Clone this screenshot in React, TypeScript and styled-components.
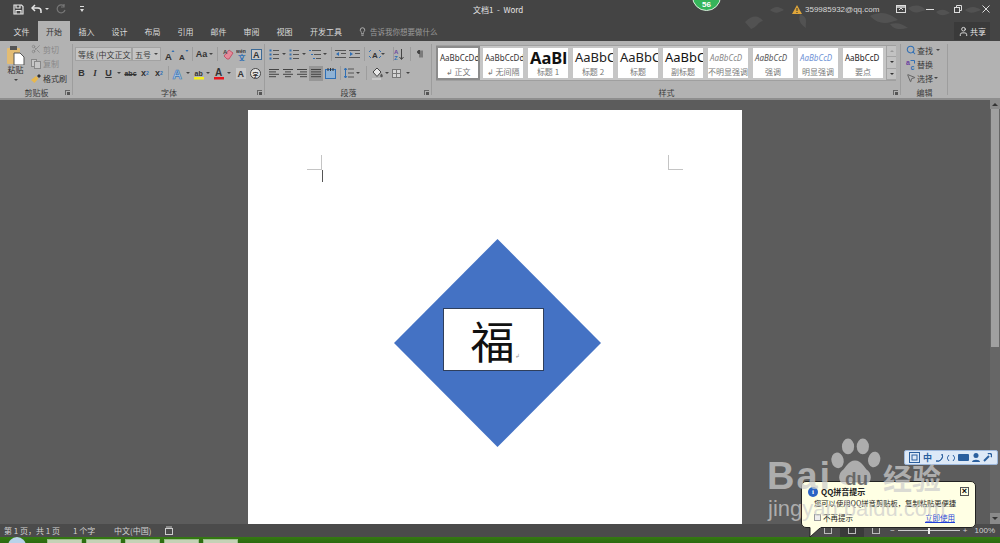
import React from 'react';
import styled, { createGlobalStyle } from 'styled-components';
import { Lightbulb, User, Scissors, Search, MousePointer2 } from 'lucide-react';

const Global = createGlobalStyle`
  html, body { margin: 0; padding: 0; background: #555; }
  body { font-family: "Noto Sans CJK SC", "Liberation Sans", sans-serif; }
`;
const Win = styled.div`position: relative; width: 1000px; height: 543px; overflow: hidden; display: flex; flex-direction: column; background: #5c5c5c;`;
const TitleBar = styled.div`position: relative; height: 21px; box-sizing: border-box; padding-bottom: 3px; background: #444; display: flex; align-items: center; color: #ddd; font-size: 8px; flex: none;`;
const Qat = styled.div`display: flex; align-items: center; width: 473px; padding-left: 13px; box-sizing: border-box;`;
const QatGap = styled.span<{ $w: number }>`width: ${p => p.$w}px; flex: none;`;
const DocTitle = styled.div`width: 319px; font-size: 8px; color: #e4e4e4; white-space: pre;`;
const Account = styled.div`display: flex; align-items: center; gap: 3px; font-family: "Liberation Sans", sans-serif; font-size: 8px; color: #d8d8d8;`;
const WinBtns = styled.div`display: flex; align-items: center; margin-left: 17px; gap: 20px; color: #ddd;`;
const Leaves = styled.svg`position: absolute; left: 740px; top: 0; pointer-events: none;`;
const TabBar = styled.div`height: 20px; background: #444; display: flex; align-items: stretch; padding-left: 5px; flex: none; position: relative;`;
const Tab = styled.div<{ $on?: boolean; $w: number }>`
  width: ${p => p.$w}px; display: flex; align-items: center; justify-content: center; font-size: 8px;
  color: ${p => (p.$on ? '#333' : '#dcdcdc')}; background: ${p => (p.$on ? '#b2b2b2' : 'transparent')};
`;
const Tell = styled.div`display: flex; align-items: center; gap: 3px; margin-left: 7px; font-size: 7.5px; color: #9c9c9c;`;
const Share = styled.div`position: absolute; left: 954px; top: 1px; width: 36px; height: 18px; background: #3a3a3a; color: #e4e4e4; font-size: 8px; display: flex; align-items: center; justify-content: center; gap: 1px;`;
const Ribbon = styled.div`height: 57px; background: #b2b2b2; display: flex; flex: none; border-bottom: 2px solid #8e8e8e; position: relative;`;
const Group = styled.div<{ $w: number }>`
  width: ${p => p.$w}px; flex: none; box-sizing: border-box; position: relative; display: flex; flex-direction: column;
  &::after { content: ''; position: absolute; right: 0; top: 3px; bottom: 3px; width: 1px; background: #9d9d9d; }
`;
const GroupBody = styled.div`height: 44px; display: flex; flex-direction: column;`;
const GroupLabel = styled.div`flex: 1; display: flex; align-items: center; justify-content: center; font-size: 8px; color: #3c3c3c; padding-top: 3px; position: relative;`;
const Launcher = styled.span`position: absolute; right: 3px; bottom: 3px; width: 5px; height: 5px; border-left: 1px solid #666; border-top: 1px solid #666; box-sizing: border-box;
  &::after { content: ''; position: absolute; right: 0; bottom: 0; width: 3px; height: 3px; background: #555; }`;
const Row = styled.div<{ $top: number; $left: number }>`display: flex; align-items: center; height: 16px; margin-top: ${p => p.$top}px; margin-left: ${p => p.$left}px;`;
const Tool = styled.div<{ $w?: number; $on?: boolean; $c?: string; $s?: number; $ml?: number }>`
  width: ${p => p.$w ?? 14}px; height: 15px; flex: none; display: flex; align-items: center; justify-content: center; margin-left: ${p => p.$ml ?? 0}px;
  font-family: "Liberation Sans", sans-serif; font-size: ${p => p.$s ?? 9}px; font-weight: 700; color: ${p => p.$c ?? '#333'};
  background: ${p => (p.$on ? '#969696' : 'transparent')}; line-height: 1;
  sub, sup { font-size: 5px; color: #2f6fb5; line-height: 0; }
`;
const Caret = styled.span<{ $m?: number; $c?: string }>`width: 0; height: 0; flex: none; margin: 0 ${p => p.$m ?? 3}px; border-left: 2px solid transparent; border-right: 2px solid transparent; border-top: 2px solid ${p => p.$c ?? '#444'};`;
const Sep = styled.span<{ $l: number; $r: number }>`width: 1px; height: 14px; flex: none; background: #9d9d9d; margin: 0 ${p => p.$r}px 0 ${p => p.$l}px;`;
const Select = styled.div<{ $w: number }>`width: ${p => p.$w}px; height: 14px; box-sizing: border-box; flex: none; background: #c4c4c4; border: 1px solid #a2a2a2; display: flex; align-items: center; justify-content: space-between; padding: 0 2px; font-size: 8px; color: #3a3a3a; white-space: nowrap; overflow: hidden;`;
const ClipBody = styled.div`display: flex; height: 44px;`;
const Paste = styled.div`width: 31px; flex: none; display: flex; flex-direction: column; align-items: center; padding-top: 5px; font-size: 8px; color: #333; line-height: 10px;`;
const PasteCaret = styled.span`width: 0; height: 0; margin-top: 4px; border-left: 2px solid transparent; border-right: 2px solid transparent; border-top: 2px solid #444;`;
const ClipList = styled.div`display: flex; flex-direction: column; padding-top: 2px; gap: 2.5px;`;
const ClipItem = styled.div<{ $dim?: boolean }>`display: flex; align-items: center; height: 12px; font-size: 8px; gap: 2px; color: ${p => (p.$dim ? '#888' : '#333')};`;
const Gallery = styled.div`display: flex; margin: 4px 0 0 4px; width: 460px; height: 36px; box-sizing: border-box; padding-left: 1px; gap: 5px; background: #c6c6c6; border: 1px solid #9f9f9f;`;
const Card = styled.div<{ $on?: boolean }>`
  width: 40px; height: 30px; margin-top: 2px; flex: none; background: #fff;
  outline: ${p => (p.$on ? '2px solid #8c8c8c' : 'none')}; display: flex; flex-direction: column; align-items: center; overflow: hidden;
`;
const Sample = styled.div<{ $s?: number; $b?: boolean; $c?: string; $i?: boolean }>`
  height: 18px; width: 100%; padding-left: 2px; box-sizing: border-box; overflow: hidden; white-space: nowrap; line-height: 19px; flex: none;
  font-family: "Noto Sans", "Liberation Sans", sans-serif; font-size: ${p => p.$s ?? 8}px; font-weight: ${p => (p.$b ? 700 : 400)}; color: ${p => p.$c ?? '#333'};
  font-style: ${p => (p.$i ? 'italic' : 'normal')}; text-align: left;
`;
const CardName = styled.div`font-size: 8px; color: #777; white-space: nowrap; line-height: 11px;`;
const Spin = styled.div`width: 10px; flex: none; display: flex; flex-direction: column; margin-left: -2px;`;
const SpinBtn = styled.div<{ $dim?: boolean }>`flex: 1; background: #c2c2c2; border-left: 1px solid #a4a4a4; border-bottom: 1px solid #a4a4a4; display: flex; align-items: center; justify-content: center;
  span { width: 0; height: 0; border-left: 2px solid transparent; border-right: 2px solid transparent; border-top: 2px solid ${p => (p.$dim ? '#999' : '#333')}; }`;
const SpinUp = styled.span`transform: rotate(180deg);`;
const EditList = styled.div`display: flex; flex-direction: column; padding: 3px 0 0 5px; gap: 2px;`;
const EditItem = styled.div`display: flex; align-items: center; height: 12px; gap: 1px; font-size: 8px; color: #3a3a3a;`;
const Collapse = styled.div`position: absolute; left: 988px; top: 50px; color: #333;`;
const Work = styled.div`flex: 1; position: relative; display: flex; min-height: 0; overflow: hidden; background: #5c5c5c;`;
const PageArea = styled.div`flex: 1; display: flex; justify-content: flex-start; padding: 10px 0 0 248px; box-sizing: border-box; min-width: 0;`;
const Page = styled.div`position: relative; width: 494px; height: 420px; flex: none; background: #fff;`;
const Crop = styled.span<{ $x: number; $y: number; $w: number; $h: number }>`position: absolute; left: ${p => p.$x}px; top: ${p => p.$y}px; width: ${p => p.$w}px; height: ${p => p.$h}px; background: #c4c4c4;`;
const Cursor = styled.span`position: absolute; left: 74px; top: 60px; width: 1px; height: 12px; background: #555;`;
const Diamond = styled.svg`position: absolute; left: 146px; top: 129px;`;
const FuBox = styled.div`position: absolute; left: 195px; top: 198px; width: 101px; height: 63px; box-sizing: border-box; background: #fff; border: 1px solid #2f3f5c; display: flex; align-items: center; justify-content: center; padding-left: 3px; font-size: 44px; line-height: 1; color: #111;`;
const Para = styled.span`font-size: 6px; color: #999; align-self: flex-end; margin-bottom: 11px;`;
const ScrollBar = styled.div`width: 10px; flex: none; background: #666; display: flex; flex-direction: column; align-items: center;`;
const ScrollHead = styled.div`width: 10px; height: 9px; background: #8a8a8a; display: flex; align-items: center; justify-content: center;
  span { width: 0; height: 0; border-left: 3px solid transparent; border-right: 3px solid transparent; border-bottom: 3px solid #333; }`;
const Thumb = styled.div`width: 8px; height: 238px; background: #a0a0a0;`;
const ScrollFoot = styled.div`margin-top: auto; width: 10px; height: 11px; background: #8a8a8a; display: flex; align-items: center; justify-content: center;
  span { width: 0; height: 0; border-left: 3px solid transparent; border-right: 3px solid transparent; border-top: 3px solid #333; }`;
const Status = styled.div`height: 13px; flex: none; background: #4b4b4b; display: flex; align-items: center; font-size: 8px; color: #d2d2d2; padding-left: 4px; position: relative; white-space: pre;`;
const StatusItem = styled.span<{ $w: number }>`width: ${p => p.$w}px; flex: none;`;
const ViewBtn = styled.span<{ $on?: boolean; $last?: boolean }>`width: 24px; height: 13px; display: flex; align-items: center; justify-content: center; margin-right: ${p => (p.$last ? 2 : 0)}px; background: ${p => (p.$on ? '#3a3a3a' : 'transparent')};
  &::after { content: ''; width: 8px; height: 7px; border: 1px solid #bbb; box-sizing: border-box; }`;
const Zoom = styled.div`display: flex; align-items: center; margin-left: auto; font-family: "Liberation Sans", sans-serif; font-size: 8px; padding-right: 5px;`;
const ZoomPct = styled.span`margin-left: 7px;`;
const Track = styled.span`position: relative; width: 62px; height: 1px; background: #ccc; margin: 0 3px;
  &::after { content: ''; position: absolute; left: 30px; top: -3px; width: 2px; height: 7px; background: #eee; }`;
const Taskbar = styled.div`height: 6px; box-sizing: border-box; flex: none; background: linear-gradient(#357a12, #2a6a0f); display: flex; padding: 2px 0 0 47px; gap: 4px; position: relative; overflow: hidden;`;
const TaskBtn = styled.div`width: 35px; height: 8px; background: #c4d2b6; border: 1px solid #9cc08c; box-sizing: border-box;`;
const Orb = styled.span`position: absolute; left: 8px; top: 0; width: 18px; height: 18px; border-radius: 50%; background: #b9d3ea;`;
const Badge = styled.div`position: absolute; left: 692px; top: -18px; width: 29px; height: 29px; border-radius: 50%; background: #35b55a; border: 1px solid #dff0e0; box-sizing: border-box; color: #fff; font-family: "Liberation Sans", sans-serif; font-size: 8px; font-weight: 700; display: flex; align-items: flex-end; justify-content: center; padding-bottom: 1px; line-height: 9px;`;
const ImeBar = styled.div`position: absolute; left: 904px; top: 450px; width: 94px; height: 15px; box-sizing: border-box; background: #dde9f7; border: 1px solid #9db8dc; border-radius: 2px; display: flex; align-items: center; gap: 3px; padding-left: 4px; color: #2a5f9e; font-size: 9px; font-weight: 700;`;
const Tip = styled.div`position: absolute; left: 801px; top: 481px; width: 175px; height: 47px; box-sizing: border-box; background: #ffffe4; border: 1px solid #222; border-radius: 5px; padding: 3px 6px 0 12px; font-size: 8px; color: #222; display: flex; flex-direction: column;`;
const TipTail = styled.svg`position: absolute; left: 809px; top: 526px;`;
const TipHead = styled.div`display: flex; align-items: center; gap: 3px; font-weight: 700; height: 13px; margin-left: -6px;`;
const TipInfo = styled.span`width: 10px; height: 10px; border-radius: 50%; background: #2b63c4; color: #fff; font-size: 7px; line-height: 10px; text-align: center; font-family: "Liberation Serif", serif;`;
const TipClose = styled.span`margin-left: auto; width: 9px; height: 9px; border: 1px solid #555; box-sizing: border-box; font-family: "Liberation Sans", sans-serif; font-size: 9px; line-height: 7px; text-align: center; color: #000; font-weight: 700;`;
const TipBody = styled.div`height: 10px; line-height: 10px; font-size: 7.3px; white-space: nowrap;`;
const TipFoot = styled.div`display: flex; align-items: center; height: 13px; margin-top: 3px; gap: 2px; font-size: 7.5px;`;
const TipCheck = styled.span`width: 7px; height: 7px; border: 1px solid #999; box-sizing: border-box; background: #eee;`;
const TipLink = styled.span`margin-left: auto; color: #1f3fd8; text-decoration: underline; margin-right: 14px;`;
const Mark = styled.div`position: absolute; left: 0; top: 0; width: 1000px; height: 543px; pointer-events: none; color: rgba(205,205,205,.72);`;
const MarkBai = styled.span`position: absolute; left: 767px; top: 452px; font-family: "Liberation Sans", sans-serif; font-size: 38px; font-weight: 700; line-height: 48px; letter-spacing: 2px;`;
const MarkDu = styled.span`position: absolute; left: 845px; top: 468px; font-family: "Liberation Sans", sans-serif; font-size: 19px; font-weight: 700; line-height: 22px; color: rgba(92,92,92,.85);`;
const MarkJy = styled.span`position: absolute; left: 883px; top: 459px; font-size: 29px; font-weight: 700; line-height: 36px; white-space: nowrap;`;
const MarkUrl = styled.span`position: absolute; left: 768px; top: 495px; font-family: "Liberation Sans", sans-serif; font-size: 22px; line-height: 28px; white-space: nowrap;`;
const Paw = styled.svg`position: absolute; left: 828px; top: 437px;`;

const Lines = ({ a = 'l', c = '#444' }: { a?: 'l' | 'c' | 'r' | 'j'; c?: string }) => {
  const xs: Record<string, [number, number][]> = {
    l: [[1, 11], [1, 8], [1, 11], [1, 8]], c: [[1, 11], [3, 9], [1, 11], [3, 9]],
    r: [[1, 11], [4, 11], [1, 11], [4, 11]], j: [[1, 11], [1, 11], [1, 11], [1, 11]],
  };
  return <svg width="12" height="10" stroke={c} strokeWidth="1">{xs[a].map(([x1, x2], i) => <line key={i} x1={x1} x2={x2} y1={1.5 + i * 2.4} y2={1.5 + i * 2.4} />)}</svg>;
};
const ListIco = ({ n }: { n?: boolean }) => (
  <svg width="10" height="11" strokeWidth="1">{[1.5, 5.5, 9.5].map(y => <g key={y}><rect x="0.5" y={y - 1} width="2" height="2" fill={n ? '#3f74ad' : '#2f6fb5'} /><line x1="4" x2="10" y1={y} y2={y} stroke="#555" /></g>)}</svg>
);
const MultiIco = () => (
  <svg width="12" height="11" strokeWidth="1" stroke="#555"><line x1="3" x2="12" y1="1.5" y2="1.5" /><line x1="5" x2="12" y1="5.5" y2="5.5" /><line x1="7" x2="12" y1="9.5" y2="9.5" /><rect x="0" y="1" width="2" height="1" fill="#2f6fb5" stroke="none" /><rect x="2" y="5" width="2" height="1" fill="#2f6fb5" stroke="none" /><rect x="4" y="9" width="2" height="1" fill="#2f6fb5" stroke="none" /></svg>
);
const IndentIco = ({ flip }: { flip?: boolean }) => (
  <svg width="11" height="10" stroke="#555"><line x1="0" x2="11" y1="1.5" y2="1.5" /><line x1="6" x2="11" y1="4.5" y2="4.5" /><line x1="0" x2="11" y1="8.5" y2="8.5" /><path d={flip ? 'M1 3l3 2-3 2z' : 'M4 3L1 5l3 2z'} fill="#2f6fb5" stroke="none" /></svg>
);
const TextDir = () => <svg width="12" height="10"><text x="3" y="8.5" fontFamily="Liberation Sans" fontSize="8" fontWeight="700" fill="#333">A</text><path d="M0 3l2-2M12 3l-2-2M0 7l2 2M12 7l-2 2" stroke="#2f6fb5" /></svg>;
const SortIco = () => <svg width="10" height="13"><text x="0" y="6" fontFamily="Liberation Sans" fontSize="6" fontWeight="700" fill="#6a4aa0">A</text><text x="0" y="12" fontFamily="Liberation Sans" fontSize="6" fontWeight="700" fill="#2f6fb5">Z</text><path d="M7.5 1v10M5.5 9l2 2.5 2-2.5" stroke="#444" fill="none" /></svg>;
const MarkIco = () => <svg width="6" height="8" stroke="#444" fill="none"><path d="M3 .5v7M5 .5v7" /><path d="M3 .5H2a1.5 1.5 0 000 3h1" fill="#444" /></svg>;
const Dist = () => <svg width="11" height="11" stroke="#2f6fb5"><rect x="0.5" y="1.5" width="10" height="9" fill="#8fb2d4" /><path d="M3 0v3M5.5 0v3M8 0v3" stroke="#333" /></svg>;
const LineSp = () => <svg width="10" height="12" stroke="#555"><path d="M4 2h6M4 6h6M4 10h6" /><path d="M1.5 1v10M0 3l1.5-2L3 3M0 9l1.5 2L3 9" stroke="#2f6fb5" fill="none" /></svg>;
const Shade = () => <svg width="11" height="13"><path d="M5 1l4 4-4 4.5L1 5z" fill="#e8e8e8" stroke="#444" /><path d="M9.5 6.5c1 1.2 1.3 1.7 1.3 2.4a1.3 1.3 0 01-2.6 0c0-.7.3-1.2 1.3-2.4z" fill="#555" /><rect x="0" y="11" width="9" height="2" fill="#c9c9c9" /></svg>;
const Borders = () => <svg width="9" height="9" stroke="#777" fill="#d4d4d4"><rect x="0.5" y="0.5" width="8" height="8" /><path d="M4.5 0v9M0 4.5h9" /></svg>;
const Eraser = () => <svg width="11" height="12"><path d="M1 8l5-6 4 3-4 6H4z" fill="#e58a9a" stroke="#c2566b" /><text x="0" y="6" fontFamily="Liberation Sans" fontSize="6" fontWeight="700" fill="#444">A</text></svg>;
const Wen = () => <svg width="12" height="13"><text x="0" y="5" fontFamily="Liberation Sans" fontSize="5" fontWeight="700" fill="#333">wén</text><text x="2" y="12.5" fontFamily="Noto Sans CJK SC" fontSize="7.5" fontWeight="700" fill="#2f6fb5">文</text></svg>;
const Boxed = () => <svg width="11" height="11"><rect x="0.5" y="0.5" width="10" height="10" fill="#c8c8c8" stroke="#3d6a96" /><text x="2" y="9" fontFamily="Liberation Sans" fontSize="9" fontWeight="700" fill="#333">A</text></svg>;
const Under = ({ c, l }: { c: string; l: string }) => <svg width="10" height="13"><text x={l === 'A' ? 1 : 0.5} y="8.5" fontFamily="Liberation Sans" fontSize={l === 'A' ? 10 : 7} fontWeight="700" fill="#333">{l}</text><rect x="0" y="10" width="10" height="2.5" fill={c} /></svg>;
const Effect = () => <svg width="12" height="13"><text x="0.5" y="11.5" fontFamily="Liberation Sans" fontSize="13" fontWeight="700" fill="#b5cde6" stroke="#3d78b8" strokeWidth=".7">A</text></svg>;
const Circled = () => <svg width="11" height="11"><circle cx="5.5" cy="5.5" r="5" fill="#e6e6e6" stroke="#444" /><text x="2.5" y="8.5" fontFamily="Noto Sans CJK SC" fontSize="6" fill="#333">字</text></svg>;
const Shaded = () => <svg width="10" height="11"><rect width="10" height="11" fill="#c8c8c8" /><text x="1.5" y="9" fontFamily="Liberation Sans" fontSize="9" fontWeight="700" fill="#333">A</text></svg>;
const Grow = ({ up, big }: { up?: boolean; big?: boolean }) => <svg width="10" height="11"><text x="0" y="10.5" fontFamily="Liberation Sans" fontSize={big ? 9.5 : 8} fontWeight="700" fill="#333">A</text><path d={up ? 'M6.5 3L8 1l1.5 2z' : 'M6.5 1L8 3l1.5-2z'} fill="#2f6fb5" /></svg>;
const PasteIco = () => <svg width="18" height="19"><rect x="0" y="2" width="13" height="16" rx="1" fill="#e3bc73" /><rect x="3" y="0" width="7" height="4" fill="#555" /><path d="M7 7h6l4 4v8H7z" fill="#fff" stroke="#555" /></svg>;
const CopyIco = () => <svg width="10" height="10" stroke="#888" fill="#c6c6c6"><rect x=".5" y=".5" width="5" height="7" /><rect x="3.5" y="2.5" width="6" height="7" /></svg>;
const Brush = () => <svg width="10" height="10"><path d="M0 7l5-4 2.5 2.5-4 4.5z" fill="#e8b84e" /><path d="M6 3l2-2 2 2-2 2z" fill="#333" /></svg>;
const ReplaceIco = () => <svg width="10" height="11"><text x="0" y="6" fontFamily="Liberation Sans" fontSize="7" fontWeight="700" fill="#6a3fa0">a</text><text x="4.5" y="11" fontFamily="Liberation Sans" fontSize="7" fontWeight="700" fill="#2f6fb5">c</text><path d="M4.5 1.5h4v3" stroke="#2f6fb5" fill="none" /></svg>;
const Warn = () => <svg width="10" height="9"><path d="M5 0l5 9H0z" fill="#e0a63a" /><path d="M5 3v3M5 7v1" stroke="#333" /></svg>;
const SaveIco = () => <svg width="11" height="11" fill="none" stroke="#e6e6e6" strokeWidth="1.2"><path d="M1 1h7.5L10 2.5V10H1z" /><path d="M3 1v3h4V1M3 10V6.5h5V10" /></svg>;
const UndoIco = () => <svg width="12" height="10" fill="none" stroke="#e6e6e6" strokeWidth="1.5"><path d="M4 1L1 4l3 3" /><path d="M1 4h6a3 3 0 013 3v2" /></svg>;
const RedoIco = () => <svg width="10" height="10" fill="none" stroke="#777" strokeWidth="1.2"><path d="M8 2a4 4 0 101 4" /><path d="M8 0v3H5" /></svg>;
const Customize = () => <svg width="4" height="6" fill="#ddd"><rect width="4" height="1" /><path d="M0 3h4L2 6z" /></svg>;
const Pane = () => <svg width="10" height="8" fill="none" stroke="#ddd"><rect x=".5" y=".5" width="9" height="7" /><path d="M.5 2h9" strokeWidth="1.5" /><path d="M3 5l2-2 2 2" /></svg>;
const Restore = () => <svg width="8" height="8" fill="none" stroke="#ddd"><rect x=".5" y="2.5" width="5" height="5" /><path d="M2.5 2V.5h5v5H6" /></svg>;
const Mini = () => <svg width="8" height="8" stroke="#ddd"><path d="M0 4.5h8" /></svg>;
const Close = () => <svg width="8" height="8" stroke="#ddd"><path d="M.5.5l7 7M7.5.5l-7 7" /></svg>;
const Keep = () => <svg width="8" height="9" fill="none" stroke="#ccc"><rect x=".5" y="2.5" width="7" height="6" /><path d="M2 0v3M4 0v3M6 0v3" /></svg>;

const styles = [
  { t: 'AaBbCcDd', n: '↲ 无间隔', s: 8 },
  { t: 'AaBl', n: '标题 1', s: 16.5, b: true, c: '#111' },
  { t: 'AaBbC', n: '标题 2', s: 13, c: '#222' },
  { t: 'AaBbC', n: '标题', s: 13, c: '#222' },
  { t: 'AaBbC', n: '副标题', s: 13, c: '#111' },
  { t: 'AaBbCcD', n: '不明显强调', s: 8, i: true, c: '#888' },
  { t: 'AaBbCcD', n: '强调', s: 8, i: true, c: '#555' },
  { t: 'AaBbCcD', n: '明显强调', s: 8, i: true, c: '#6f93d6' },
  { t: 'AaBbCcD', n: '要点', s: 8, c: '#222' },
];

export default function App() {
  return (
    <Win>
      <Global />
      <TitleBar>
        <Qat>
          <SaveIco />
          <QatGap $w={7} />
          <UndoIco />
          <Caret $m={2} $c="#ddd" />
          <QatGap $w={5} />
          <RedoIco />
          <QatGap $w={14} />
          <Customize />
        </Qat>
        <DocTitle>文档1  -  Word</DocTitle>
        <Account><Warn />359985932@qq.com</Account>
        <WinBtns><Pane /><Mini /><Restore /><Close /></WinBtns>
      </TitleBar>
      <TabBar>
        <Tab $w={33}>文件</Tab><Tab $on $w={32}>开始</Tab>
        <Tab $w={33}>插入</Tab><Tab $w={33}>设计</Tab><Tab $w={33}>布局</Tab><Tab $w={33}>引用</Tab>
        <Tab $w={33}>邮件</Tab><Tab $w={33}>审阅</Tab><Tab $w={33}>视图</Tab><Tab $w={50}>开发工具</Tab>
        <Tell><Lightbulb size={9} color="#ccc" />告诉我你想要做什么</Tell>
        <Share><User size={11} />共享</Share>
      </TabBar>
      <Leaves width="260" height="41" fill="rgba(255,255,255,.08)">
        <path d="M5 22c8-8 14-6 18-1-6 1-5 6-12 8z" /><path d="M30 10c6-5 10-3 14 0-5 2-8 5-14 0z" />
        <path d="M60 14c-2 6 0 10 6 14-1-6 3-10-6-14z" /><path d="M130 16c12-6 20-2 28 4-10 3-18 6-28-4z" />
        <path d="M168 8c8-5 14-2 18 2-7 2-12 5-18-2z" /><path d="M196 12c6-4 10-2 14 1-5 2-9 4-14-1z" />
        <path d="M225 10c6-5 12-3 16 0-6 2-10 5-16 0z" /><path d="M150 24c8-2 12 0 18 4-7 1-13 3-18-4z" />
      </Leaves>
      <Ribbon>
        <Group $w={73}>
          <ClipBody>
            <Paste><PasteIco />粘贴<PasteCaret /></Paste>
            <ClipList>
              <ClipItem $dim><Scissors size={10} color="#888" />剪切</ClipItem>
              <ClipItem $dim><CopyIco />复制</ClipItem>
              <ClipItem><Brush />格式刷</ClipItem>
            </ClipList>
          </ClipBody>
          <GroupLabel>剪贴板<Launcher /></GroupLabel>
        </Group>
        <Group $w={192}>
          <GroupBody>
            <Row $top={5} $left={2}>
              <Select $w={57}>等线 (中文正文)<Caret $m={0} /></Select>
              <Select $w={29}>五号<Caret $m={0} /></Select>
              <Tool $w={15} $ml={1}><Grow up big /></Tool><Tool $w={14}><Grow /></Tool>
              <Sep $l={1} $r={1} />
              <Tool $w={15} $s={9}>Aa</Tool><Caret $m={0} />
              <Sep $l={4} $r={3} />
              <Tool><Eraser /></Tool><Tool><Wen /></Tool><Tool><Boxed /></Tool>
            </Row>
            <Row $top={3} $left={2}>
              <Tool $w={13}>B</Tool><Tool $w={14} style={{ fontStyle: 'italic', fontFamily: 'Liberation Serif' }}>I</Tool>
              <Tool $w={13} style={{ textDecoration: 'underline' }}>U</Tool><Caret $m={2} />
              <Tool $w={15} $s={7} style={{ textDecoration: 'line-through' }}>abc</Tool>
              <Tool $w={14}>x<sub>2</sub></Tool><Tool $w={14}>x<sup>2</sup></Tool>
              <Sep $l={2} $r={2} />
              <Tool $w={13}><Effect /></Tool><Caret $m={2} />
              <Tool $w={13}><Under c="#f4ee1c" l="ab" /></Tool><Caret $m={1} />
              <Tool $w={16}><Under c="#e8141c" l="A" /></Tool><Caret $m={0} />
              <Tool $w={14} $ml={3}><Shaded /></Tool><Tool $w={14}><Circled /></Tool>
            </Row>
          </GroupBody>
          <GroupLabel>字体<Launcher /></GroupLabel>
        </Group>
        <Group $w={167}>
          <GroupBody>
            <Row $top={5} $left={2}>
              <Tool $w={14}><ListIco /></Tool><Caret $m={1} />
              <Tool $w={14}><ListIco n /></Tool><Caret $m={1} />
              <Tool $w={16}><MultiIco /></Tool><Caret $m={0} />
              <Sep $l={4} $r={1} />
              <Tool><IndentIco /></Tool><Tool><IndentIco flip /></Tool>
              <Sep $l={3} $r={3} />
              <Tool $w={13}><TextDir /></Tool><Caret $m={0} />
              <Sep $l={8} $r={0} />
              <Tool $w={10}><SortIco /></Tool>
              <Sep $l={6} $r={2} />
              <Tool $w={14}><MarkIco /></Tool>
            </Row>
            <Row $top={3} $left={2}>
              <Tool><Lines /></Tool><Tool><Lines a="c" /></Tool><Tool><Lines a="r" /></Tool>
              <Tool $on><Lines a="j" /></Tool><Tool><Dist /></Tool>
              <Sep $l={3} $r={1} />
              <Tool $w={13}><LineSp /></Tool><Caret $m={1} />
              <Sep $l={5} $r={3} />
              <Tool $w={14}><Shade /></Tool><Caret $m={1} />
              <Tool $w={13}><Borders /></Tool><Caret />
            </Row>
          </GroupBody>
          <GroupLabel>段落<Launcher /></GroupLabel>
        </Group>
        <Group $w={469}>
          <GroupBody>
            <Gallery>
              <Card $on><Sample>AaBbCcDd</Sample><CardName>↲ 正文</CardName></Card>
              {styles.map((s, i) => (
                <Card key={i}><Sample $s={s.s} $b={s.b} $c={s.c} $i={s.i}>{s.t}</Sample><CardName>{s.n}</CardName></Card>
              ))}
              <Spin>
                <SpinBtn $dim><SpinUp /></SpinBtn>
                <SpinBtn><span /></SpinBtn>
                <SpinBtn><span /></SpinBtn>
              </Spin>
            </Gallery>
          </GroupBody>
          <GroupLabel>样式<Launcher /></GroupLabel>
        </Group>
        <Group $w={47}>
          <GroupBody>
            <EditList>
              <EditItem><Search size={10} color="#2f6fb5" strokeWidth={2.5} />查找<Caret $m={2} /></EditItem>
              <EditItem><ReplaceIco />替换</EditItem>
              <EditItem><MousePointer2 size={10} color="#555" />选择<Caret $m={0} /></EditItem>
            </EditList>
          </GroupBody>
          <GroupLabel>编辑</GroupLabel>
        </Group>
        <Collapse>
          <svg width="7" height="5" fill="none" stroke="#333" strokeWidth="1.5"><path d="M1 4l2.5-2.5L6 4" /></svg>
        </Collapse>
      </Ribbon>
      <Work>
        <PageArea>
          <Page>
            <Crop $x={59} $y={59} $w={15} $h={1} />
            <Crop $x={73} $y={45} $w={1} $h={15} />
            <Crop $x={420} $y={59} $w={15} $h={1} />
            <Crop $x={420} $y={45} $w={1} $h={15} />
            <Cursor />
            <Diamond width="207" height="208"><path d="M103.5 0L207 104 103.5 208 0 104z" fill="#4472c4" /></Diamond>
            <FuBox>福<Para>↲</Para></FuBox>
          </Page>
        </PageArea>
        <ScrollBar>
          <ScrollHead><span /></ScrollHead>
          <Thumb />
          <ScrollFoot><span /></ScrollFoot>
        </ScrollBar>
      </Work>
      <Status>
        <StatusItem $w={69}>第 1 页，共 1 页</StatusItem>
        <StatusItem $w={41}>1 个字</StatusItem>
        <StatusItem $w={51}>中文(中国)</StatusItem>
        <Keep />
        <Zoom>
          <ViewBtn /><ViewBtn $on /><ViewBtn $last />
          −<Track />+<ZoomPct>100%</ZoomPct>
        </Zoom>
      </Status>
      <Taskbar>
        <Orb />
        <TaskBtn /><TaskBtn /><TaskBtn /><TaskBtn /><TaskBtn />
      </Taskbar>
      <Badge>56</Badge>
      <ImeBar>
        <svg width="11" height="11" fill="none" stroke="#2a5f9e"><rect x=".5" y=".5" width="10" height="10" /><rect x="3" y="3" width="5" height="5" /></svg>
        <span>中</span>
        <svg width="9" height="10" fill="#2a5f9e"><path d="M7 1a5 5 0 01-6 7 5 5 0 006-7z" stroke="#2a5f9e" /></svg>
        <svg width="8" height="6" fill="none" stroke="#2a5f9e"><path d="M2 0L0 3l2 3M6 0l2 3-2 3" /></svg>
        <svg width="11" height="7" fill="#2a5f9e"><rect width="11" height="7" rx="1" /></svg>
        <svg width="8" height="9" fill="#2a5f9e"><circle cx="4" cy="2.5" r="2.5" /><path d="M0 9c0-3 8-3 8 0z" /></svg>
        <svg width="9" height="9" stroke="#2a5f9e" strokeWidth="2" fill="none"><path d="M1 8l5-5" /><path d="M5 1a2 2 0 013 3" strokeWidth="1.5" /></svg>
      </ImeBar>
      <Tip>
        <TipHead><TipInfo>i</TipInfo>QQ拼音提示<TipClose>×</TipClose></TipHead>
        <TipBody>您可以使用QQ拼音剪贴板，复制粘贴更便捷</TipBody>
        <TipFoot><TipCheck />不再提示<TipLink>立即使用</TipLink></TipFoot>
      </Tip>
      <TipTail width="16" height="12"><path d="M1 1v10L11 2" fill="#ffffe4" stroke="#222" /><rect x="1.5" y="0" width="10" height="2" fill="#ffffe4" /></TipTail>
      <Mark>
        <Paw width="54" height="52" viewBox="0 0 62 58" fill="rgba(205,205,205,.72)">
          <ellipse cx="11" cy="26" rx="7" ry="9" transform="rotate(-12 11 26)" />
          <ellipse cx="23" cy="10" rx="7" ry="9" />
          <ellipse cx="40" cy="10" rx="7" ry="9" />
          <ellipse cx="53" cy="25" rx="7" ry="9" transform="rotate(12 53 25)" />
          <path d="M31 26c8 0 10 8 15 12 6 6 3 16-5 16-4 0-6-2-10-2s-6 2-10 2c-8 0-11-10-5-16 5-4 7-12 15-12z" />
        </Paw>
        <MarkBai>Bai</MarkBai>
        <MarkDu>du</MarkDu>
        <MarkJy>经验</MarkJy>
        <MarkUrl>jingyan.baidu.com</MarkUrl>
      </Mark>
    </Win>
  );
}
